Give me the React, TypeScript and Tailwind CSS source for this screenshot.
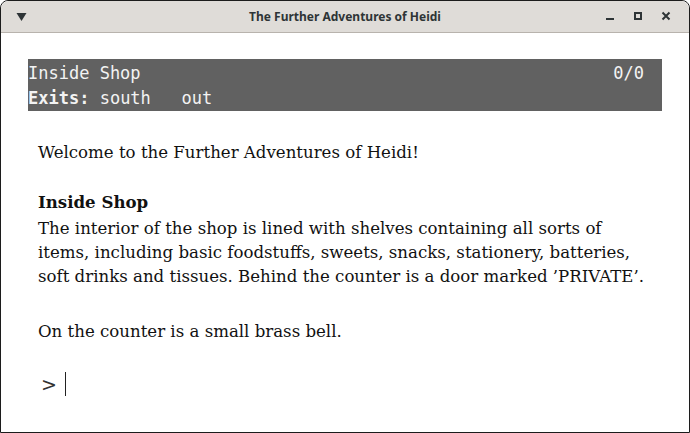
const serif = { fontFamily: '"DejaVu Serif", serif' };

const TitleBar = () => (
  <div className="relative flex h-[32px] items-center justify-center rounded-t-[8px] border-b border-[#b8b3ad] bg-[#dfdcd8]">
    <svg className="absolute left-[15px] top-[11px]" width="11" height="10" viewBox="0 0 11 10">
      <path d="M0.5 1 L10.5 1 L5.5 9 Z" fill="#2e3436" />
    </svg>
    <span className="text-[12px] font-bold text-[#2e3436]" style={{ fontFamily: '"Noto Sans", sans-serif' }}>
      The Further Adventures of Heidi
    </span>
    <div className="absolute right-[18px] top-[10px] flex items-center gap-[18px]">
      <svg width="10" height="10" viewBox="0 0 10 10">
        <rect x="1" y="7" width="8" height="2" fill="#2e3436" />
      </svg>
      <svg width="10" height="10" viewBox="0 0 10 10">
        <rect x="2" y="2" width="6" height="6" fill="none" stroke="#2e3436" strokeWidth="2" />
      </svg>
      <svg width="10" height="10" viewBox="0 0 10 10">
        <path d="M1.5 1.5 L8.5 8.5 M8.5 1.5 L1.5 8.5" stroke="#2e3436" strokeWidth="2" />
      </svg>
    </div>
  </div>
);

const StatusBar = () => (
  <div
    className="mx-[27px] mt-[26px] flex flex-col bg-[#616161] pl-0 pt-[2px] text-[17px] leading-[25px] text-[#f3f3f3]"
    style={{ fontFamily: '"DejaVu Sans Mono", monospace' }}
  >
    <div className="flex justify-between pr-[18px]">
      <span>Inside Shop</span>
      <span>0/0</span>
    </div>
    <div className="whitespace-pre">
      <span className="font-bold">Exits:</span> south   out
    </div>
  </div>
);

export default function App() {
  return (
    <div className="h-[433px] w-[690px] overflow-hidden bg-white">
      <div className="flex h-full flex-col rounded-t-[8px] border border-[#1c1c1c] bg-white">
        <TitleBar />
        <StatusBar />
        <div className="px-[37px] pt-[30px] text-[16.6px] leading-[24px] text-[#111]" style={serif}>
          <p>Welcome to the Further Adventures of Heidi!</p>
          <p className="mt-[25px] font-bold">Inside Shop</p>
          <p className="mt-[3px] whitespace-nowrap">
            The interior of the shop is lined with shelves containing all sorts of
            <br />
            items, including basic foodstuffs, sweets, snacks, stationery, batteries,
            <br />
            soft drinks and tissues. Behind the counter is a door marked ’PRIVATE’.
          </p>
          <p className="mt-[31px]">On the counter is a small brass bell.</p>
          <div className="mt-[28px] flex h-[24px] items-center gap-[8px] pl-[3px]">
            <span className="text-[19px] font-light text-[#333]">&gt;</span>
            <span className="inline-block h-[24px] w-[1.5px] bg-[#222]" />
          </div>
        </div>
      </div>
    </div>
  );
}
